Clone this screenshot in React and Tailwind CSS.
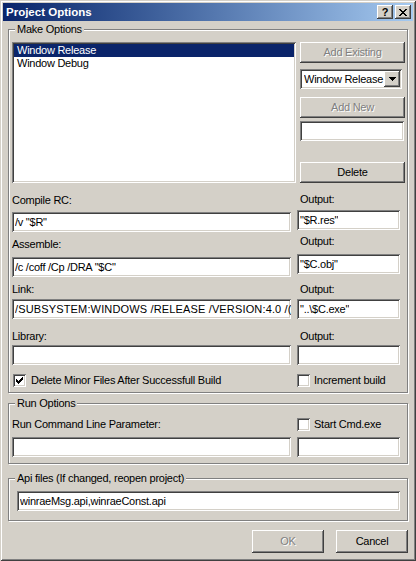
import React from 'react';

const raised = 'shadow-[inset_-1px_-1px_#404040,inset_1px_1px_#ffffff,inset_-2px_-2px_#808080,inset_2px_2px_#d4d0c8]';
const sunken = 'shadow-[inset_1px_1px_#808080,inset_-1px_-1px_#ffffff,inset_2px_2px_#404040,inset_-2px_-2px_#d4d0c8]';

const CLOSE = ['11....11', '.11..11.', '..1111..', '...11...', '..1111..', '.11..11.', '11....11'];
const CHECK = [[3, 5], [4, 6], [5, 7], [6, 6], [7, 5], [8, 4], [9, 3]];

const PixelGlyph = ({ rows }) => (
  <svg width={rows[0].length} height={rows.length} shapeRendering="crispEdges">
    {rows.map((row, y) =>
      row.split('').map((c, x) => (c === '1' ? <rect key={`${x}-${y}`} x={x} y={y} width="1" height="1" fill="#000" /> : null))
    )}
  </svg>
);

const TitleButton = ({ children }) => (
  <div className={`w-[16px] h-[14px] bg-[#d4d0c8] ${raised} flex items-center justify-center`}>{children}</div>
);

const Button = ({ children, disabled, className = '' }) => (
  <button
    type="button"
    className={`flex items-center justify-center bg-[#d4d0c8] ${raised} ${
      disabled ? 'text-[#808080] [text-shadow:1px_1px_0_#ffffff]' : 'text-black'
    } ${className}`}
  >
    {children}
  </button>
);

const Edit = ({ value = '', className = '' }) => (
  <div className={`h-[20px] bg-white ${sunken} pl-[3px] flex items-center overflow-hidden whitespace-nowrap ${className}`}>
    <span className="overflow-hidden">{value}</span>
  </div>
);

const Check = ({ checked }) => (
  <div className={`w-[13px] h-[13px] shrink-0 bg-white ${sunken}`}>
    {checked && (
      <svg width="13" height="13" shapeRendering="crispEdges">
        {CHECK.map(([x, y]) => (
          <rect key={x} x={x} y={y} width="1" height="3" fill="#000" />
        ))}
      </svg>
    )}
  </div>
);

const Group = ({ title, className = '', children }) => (
  <fieldset className={`w-[400px] ml-[5px] min-w-0 border border-[#808080] shadow-[inset_1px_1px_#ffffff,1px_1px_#ffffff] pl-[3px] ${className}`}>
    <legend className="ml-[3px] px-[2px] bg-[#d4d0c8] leading-[13px]">{title}</legend>
    {children}
  </fieldset>
);

const App = () => {
  return (
    <div className="w-[416px] h-[561px] bg-[#d4d0c8] p-[3px] shadow-[inset_1px_1px_#d4d0c8,inset_-1px_-1px_#404040,inset_2px_2px_#ffffff,inset_-2px_-2px_#808080] font-[Liberation_Sans,Arial,sans-serif] text-[11px] leading-[13px] tracking-[-0.25px] text-black flex flex-col">
      {/* TITLE BAR */}
      <div className="h-[18px] shrink-0 flex items-center bg-linear-to-r from-[#0a246a] to-[#a6caf0] pl-[3px] pr-[2px]">
        <span className="font-bold text-white text-[11.5px] tracking-normal">Project Options</span>
        <div className="ml-auto flex gap-[2px]">
          <TitleButton>
            <span className="font-bold text-[11px] leading-none tracking-normal">?</span>
          </TitleButton>
          <TitleButton>
            <PixelGlyph rows={CLOSE} />
          </TitleButton>
        </div>
      </div>

      {/* MAKE OPTIONS */}
      <Group title="Make Options" className="mt-[2px] pt-[6px] pb-[5px]">
        <div className="flex">
          <div className={`w-[284px] h-[141px] bg-white ${sunken} p-[2px]`}>
            <div className="h-[13px] bg-[#0a246a] text-white pl-[3px]">Window Release</div>
            <div className="h-[13px] pl-[3px]">Window Debug</div>
          </div>
          <div className="ml-[4px] w-[105px] flex flex-col">
            <Button disabled className="h-[21px] w-[105px]">Add Existing</Button>
            <div className={`mt-[6px] w-[102px] h-[20px] bg-white ${sunken} flex items-center pl-[4px] pr-[2px]`}>
              <span className="flex-1 overflow-hidden whitespace-nowrap">Window Release</span>
              <div className={`w-[16px] h-[16px] bg-[#d4d0c8] ${raised} flex items-center justify-center`}>
                <PixelGlyph rows={['1111111', '.11111.', '..111..', '...1...']} />
              </div>
            </div>
            <Button disabled className="mt-[8px] h-[21px] w-[105px]">Add New</Button>
            <Edit className="mt-[3px] w-[104px]" />
            <Button className="mt-[21px] h-[21px] w-[105px]">Delete</Button>
          </div>
        </div>

        <div className="flex">
          <div className="w-[279px]">
            <div className="mt-[11px]">Compile RC:</div>
            <Edit className="mt-[5px]" value={'/v "$R"'} />
          </div>
          <div className="ml-[6px] w-[103px]">
            <div className="mt-[10px] pl-[3px]">Output:</div>
            <Edit className="mt-[4px]" value={'"$R.res"'} />
          </div>
        </div>

        <div className="flex">
          <div className="w-[279px]">
            <div className="mt-[6px]">Assemble:</div>
            <Edit className="mt-[6px]" value={'/c /coff /Cp /DRA "$C"'} />
          </div>
          <div className="ml-[6px] w-[103px]">
            <div className="mt-[3px] pl-[3px]">Output:</div>
            <Edit className="mt-[6px]" value={'"$C.obj"'} />
          </div>
        </div>

        <div className="flex">
          <div className="w-[279px]">
            <div className="mt-[6px]">Link:</div>
            <Edit className="mt-[3px] tracking-[0.15px]" value={'/SUBSYSTEM:WINDOWS /RELEASE /VERSION:4.0 /('} />
          </div>
          <div className="ml-[6px] w-[103px]">
            <div className="mt-[6px] pl-[3px]">Output:</div>
            <Edit className="mt-[3px]" value={'"..\\$C.exe"'} />
          </div>
        </div>

        <div className="flex">
          <div className="w-[279px]">
            <div className="mt-[11px]">Library:</div>
            <Edit className="mt-[2px]" />
          </div>
          <div className="ml-[6px] w-[103px]">
            <div className="mt-[11px] pl-[3px]">Output:</div>
            <Edit className="mt-[2px]" />
          </div>
        </div>

        <div className="flex mt-[9px] h-[13px]">
          <div className="w-[279px] pl-[1px] flex items-center">
            <Check checked />
            <span className="ml-[5px] whitespace-nowrap">Delete Minor Files After Successfull Build</span>
          </div>
          <div className="ml-[6px] flex items-center">
            <Check />
            <span className="ml-[4px] whitespace-nowrap">Increment build</span>
          </div>
        </div>
      </Group>

      {/* RUN OPTIONS */}
      <Group title="Run Options" className="mt-[4px] pt-[8px] pb-[6px]">
        <div className="flex">
          <div className="w-[279px]">
            <div className="h-[13px]">Run Command Line Parameter:</div>
            <Edit className="mt-[6px]" />
          </div>
          <div className="ml-[6px] w-[103px]">
            <div className="h-[13px] flex items-center">
              <Check />
              <span className="ml-[4px] whitespace-nowrap">Start Cmd.exe</span>
            </div>
            <Edit className="mt-[6px]" />
          </div>
        </div>
      </Group>

      {/* API FILES */}
      <Group title="Api files (If changed, reopen project)" className="mt-[8px] pt-[6px] pb-[9px]">
        <Edit className="ml-[5px] w-[383px] h-[19px]" value="winraeMsg.api,winraeConst.api" />
      </Group>

      {/* FOOTER */}
      <div className="w-[400px] ml-[5px] mt-[9px] flex justify-end gap-[12px]">
        <Button disabled className="w-[72px] h-[23px]">OK</Button>
        <Button className="w-[72px] h-[23px]">Cancel</Button>
      </div>
    </div>
  );
};

export default App;
